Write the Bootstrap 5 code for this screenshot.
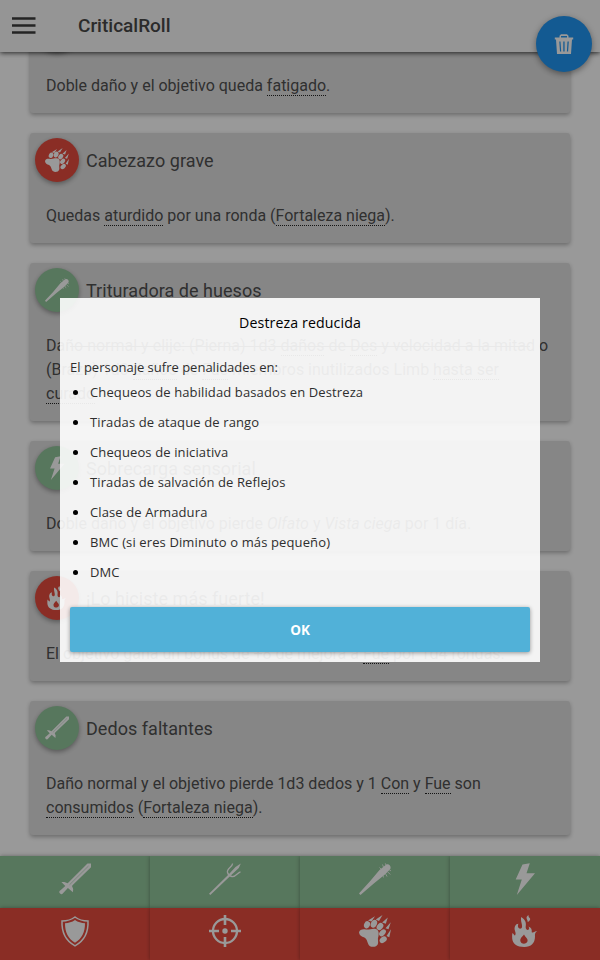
<!DOCTYPE html>
<html lang="es">
<head>
<meta charset="utf-8">
<meta name="viewport" content="width=device-width, initial-scale=1">
<title>CriticalRoll</title>
<link href="https://cdn.jsdelivr.net/npm/bootstrap@5.3.0/dist/css/bootstrap.min.css" rel="stylesheet">
<style>
body{font-family:Roboto,sans-serif;font-size:16px;line-height:24px;color:#505050;background:#fff}
.app{height:960px}
.topbar{height:52px;background:#f8f8f8;box-shadow:0 1px 5px rgba(0,0,0,.75);z-index:2}
.brand{font-size:19px;font-weight:500;color:#484848;margin-left:42px}
.feed{padding:3px 30px 0;gap:20px;margin-top:-52px}
.crit{background:#e0e0e0;border-radius:3px;box-shadow:0 2px 4px rgba(0,0,0,.3);padding-bottom:15px}
.crit h2{font-size:18px;font-weight:400;line-height:24px;letter-spacing:.04px;margin:0;padding-top:2px}
.crit-head{padding:5px 5px 0;gap:7px}
.crit p{margin:22px 16px 0}
.crit abbr{text-decoration:none;border-bottom:1px dotted #222;cursor:help;display:inline-block;line-height:18px}
.disc{width:44px;height:44px;box-shadow:0 2px 5px rgba(0,0,0,.35)}
.disc svg{width:24px;height:24px}
.green{background:#92c69b}.red{background:#e74c3f}
.fab{width:56px;height:56px;top:16px;right:8px;background:#2196f3;box-shadow:0 2px 6px rgba(0,0,0,.4);z-index:3}
.pad{height:52px;box-shadow:0 0 4px rgba(0,0,0,.35);padding-bottom:6px}
.pad svg{width:32px;height:32px}
svg{fill:#fff;display:block}
.veil{background:rgba(0,0,0,.4);z-index:10}
.dialog-box{width:480px;height:364px;background:rgba(255,255,255,.9);padding:10px;color:#2e2e2e;font-family:"Open Sans","Noto Sans",sans-serif;font-size:13px;line-height:20px}
.dialog-box h1{font-size:14.2px;letter-spacing:.1px;line-height:30px;font-weight:500;color:#000;margin:0}
.dialog-box hr{margin:8px 0 10px;border:0;border-top:1px solid #e9e9e9;opacity:1}
.dialog-box ul{padding-left:20px;margin:0;letter-spacing:.12px}
.dialog-box li{height:30px;padding-top:4px}
.dialog-box li::marker{color:#000;font-size:15px}
.ok{height:45px;background:#51b1d8;color:#fff;font-size:13.500px;font-weight:700;border-radius:2px;border:0;box-shadow:0 1px 4px rgba(0,0,0,.4);margin-top:20px}
</style>
<script src="https://cdn.jsdelivr.net/npm/bootstrap@5.3.0/dist/js/bootstrap.bundle.min.js"></script>
</head>
<body>
<svg class="d-none">
<symbol id="sword" viewBox="0 0 32 32"><path d="M28.500.600H32v3.600L14 21.800l-1 1.200 1.200 3-.3 3.200-5-4.300L4 30.300a2 2 0 1 1-3.200-2.600l1-.6L6.300 23 2.400 18.900l2.800.1 3.500 1.300z"/><path d="M29.500 3 10.500 21.800" stroke="#92c69b" stroke-width=".5"/></symbol>
<symbol id="trident" viewBox="0 0 32 32"><path d="M31.800.500 29.800 5 21.500 12.700 1.300 32 0 30.700 19.800 11.300 26.500 4z"/><path d="M23.600.500C23.500 4 17.300 5.500 18.500 9.500c.5 1.800 1.500 3.500 4.500 4 4 .6 5.500-4 8.500-4.700" fill="none" stroke="#fff" stroke-width="1.300"/></symbol>
<symbol id="bat" viewBox="0 0 32 32"><path d="M27 1.700c2.500-1.600 5.600 1 4.300 4.300L26.500 11 14.500 20.700 2.600 31 1.500 32 0 30.400l.8-1L10.800 18.500 20.500 7z"/><path d="M22 6l-1.500-1.500M24.500 4l-1-2.500M27 2.300 26.300.300M30.300 7l1.700.8M28.800 9l2.500 2.500M26.500 10.500l1.500 3M24 12.500l.5 2" stroke="#fff" stroke-width=".8"/></symbol>
<symbol id="bolt" viewBox="0 0 32 32"><path d="M13.500 1.500 20.800.300 17.500 10.300H26L7.800 32l5-15.500H6.700z"/></symbol>
<symbol id="shield" viewBox="0 0 32 32"><path d="M16 2c4 3 9 4 13 4 .5 12-4 20-13 24.800C7 26 2.500 18 3 6c4 0 9-1 13-4z" fill="none" stroke="#fff" stroke-width="1.500"/><path d="M16 5c3 2.200 6.500 3 10 3.300C26 17.500 23 23.500 16 27.800 9 23.500 6 17.500 6 8.300 9.500 8 13 7.200 16 5z"/></symbol>
<symbol id="target" viewBox="0 0 32 32"><circle cx="16" cy="16" r="12" fill="none" stroke="#fff" stroke-width="2.300"/><circle cx="16" cy="16" r="2.700"/><path d="M16 0v10M16 22v10M0 16h10M22 16h10" stroke="#fff" stroke-width="2.600"/></symbol>
<symbol id="paw" viewBox="0 0 32 32"><path d="M0 17.500C.500 14.500 3.500 14 7 14.500c3.500.4 6.500-1.500 10-.5 3.300 1 3 5.500 2 9-.5 2.500 1.500 6-2 8.200-3.500 1.500-6.800.3-7.800-2.300-1.200-2.700-1.200-5-3.800-6.400C2.500 21.500.500 20.500 0 17.500z"/><ellipse cx="8" cy="9.800" rx="2.900" ry="3.700" transform="rotate(25 8 9.800)"/><ellipse cx="14.900" cy="8.700" rx="3" ry="4.100" transform="rotate(25 14.900 8.700)"/><ellipse cx="21" cy="11.500" rx="2.900" ry="3.900" transform="rotate(38 21 11.500)"/><ellipse cx="23.500" cy="17.800" rx="2.700" ry="4" transform="rotate(42 23.500 17.800)"/><ellipse cx="24.200" cy="24.700" rx="2.800" ry="4" transform="rotate(50 24.200 24.700)"/><path d="M9 5.500 16 1.200 12.500 6.500zM16.800 4.500 23.500 0 20 6zM23.200 7.500 28.800 2.500 26.800 8.700zM26.500 13.300 31.800 7.200 29.500 14.200zM27.500 21 32 14.200 30.300 22.200z"/></symbol>
<symbol id="fire" viewBox="0 0 32 32"><path fill-rule="evenodd" d="M12.300 2c4.500 3 5 6 4.400 9.500-.4 3 2.300 4.500 3.300 2.500.4-1-.1-1.800-.6-2.500 3 1 3.700 3.200 3.300 5.700 2 .8 3-1.200 5.500-1.200-2 1-2.500 3-2.200 5.500C26 28 22 32 15.300 32 8 32 3.500 28.500 3.200 23.500c0-2-.3-3.500.3-5.500 1.200 1.200 1.600 2.200 2.500 2.600 2-3-1.500-5-.1-9 .8-2.200 2.300-2.800 3.500-2.800-1.600 3.400 1 6 3 4.500 2.200-2-1.500-7.500-.1-11.300zM15 19.500c-2 2.500-4.500 4-3.500 7 1.200 3.200 6.300 2.600 7-.3.700-2.700-2-3.700-3.500-6.700z"/><path d="M19.500 0c-4 3-.5 4.500-.8 7 3-1.500 3-3.500 1.500-4.500-.7-.7-.7-1.500-.7-2.500z"/></symbol>
</svg>
<div class="app position-relative overflow-hidden d-flex flex-column">
<header class="topbar position-relative d-flex align-items-center flex-shrink-0 px-2">
<svg class="ms-1" width="24" height="18" viewBox="0 0 24 18"><path d="M0 1.500h23.500M0 8.500h23.500M0 15.500h23.500" stroke="#3c3c3c" stroke-width="2.300"/></svg>
<span class="brand">CriticalRoll</span>
</header>
<button class="fab btn rounded-circle position-absolute border-0 p-0 d-flex align-items-center justify-content-center" aria-label="Borrar"><svg width="20" height="22" viewBox="0 0 20 22"><path fill-rule="evenodd" d="M5.500 4.500V2.800L7 1.300h6l1.500 1.500v1.700h4.700v2H18L17 21H3L2 6.500H.800v-2zM7 4.500h6V3H7zM5.300 8.500 6 18.500h1.200L6.500 8.500zm4 0v10h1.300v-10zm4.200 0-.6 10h1.200l.7-10z"/></svg></button>
<main class="feed d-flex flex-column flex-grow-1 overflow-hidden">
<article class="crit flex-shrink-0"><div class="crit-head d-flex align-items-center"><span class="disc green rounded-circle d-flex align-items-center justify-content-center"></span></div><p>Doble daño y el objetivo queda <abbr>fatigado</abbr>.</p></article>
<article class="crit flex-shrink-0"><div class="crit-head d-flex align-items-center"><span class="disc red rounded-circle d-flex align-items-center justify-content-center"><svg><use href="#paw"/></svg></span><h2>Cabezazo grave</h2></div><p>Quedas <abbr>aturdido</abbr> por una ronda (<abbr>Fortaleza niega</abbr>).</p></article>
<article class="crit flex-shrink-0"><div class="crit-head d-flex align-items-center"><span class="disc green rounded-circle d-flex align-items-center justify-content-center"><svg><use href="#bat"/></svg></span><h2>Trituradora de huesos</h2></div><p>Daño normal y elije: (Pierna) 1d3 <abbr>daños</abbr> de <abbr>Des</abbr> y velocidad a la mitad o<br>(Brazo) 1d3 <abbr>daños</abbr> de <abbr>Fue</abbr> miembros inutilizados Limb <abbr>hasta ser</abbr><br><abbr>curado</abbr></p></article>
<article class="crit flex-shrink-0"><div class="crit-head d-flex align-items-center"><span class="disc green rounded-circle d-flex align-items-center justify-content-center"><svg><use href="#bolt"/></svg></span><h2>Sobrecarga sensorial</h2></div><p>Doble daño y el objetivo pierde <em>Olfato</em> y <em>Vista ciega</em> por 1 día.</p></article>
<article class="crit flex-shrink-0"><div class="crit-head d-flex align-items-center"><span class="disc red rounded-circle d-flex align-items-center justify-content-center"><svg><use href="#fire"/></svg></span><h2>¡Lo hiciste más fuerte!</h2></div><p>El objetivo gana un bonus de +8 de mejora a <abbr>Fue</abbr> por 1d4 rondas.</p></article>
<article class="crit flex-shrink-0"><div class="crit-head d-flex align-items-center"><span class="disc green rounded-circle d-flex align-items-center justify-content-center"><svg><use href="#sword"/></svg></span><h2>Dedos faltantes</h2></div><p>Daño normal y el objetivo pierde 1d3 dedos y 1 <abbr>Con</abbr> y <abbr>Fue</abbr> son<br><abbr>consumidos</abbr> (<abbr>Fortaleza niega</abbr>).</p></article>
</main>
<footer class="row row-cols-4 g-0 flex-shrink-0">
<div class="col pad green d-flex align-items-center justify-content-center"><svg><use href="#sword"/></svg></div>
<div class="col pad green d-flex align-items-center justify-content-center"><svg><use href="#trident"/></svg></div>
<div class="col pad green d-flex align-items-center justify-content-center"><svg><use href="#bat"/></svg></div>
<div class="col pad green d-flex align-items-center justify-content-center"><svg><use href="#bolt"/></svg></div>
<div class="col pad red d-flex align-items-center justify-content-center"><svg><use href="#shield"/></svg></div>
<div class="col pad red d-flex align-items-center justify-content-center"><svg><use href="#target"/></svg></div>
<div class="col pad red d-flex align-items-center justify-content-center"><svg><use href="#paw"/></svg></div>
<div class="col pad red d-flex align-items-center justify-content-center"><svg><use href="#fire"/></svg></div>
</footer>
<div class="veil position-absolute top-0 start-0 w-100 h-100 d-flex align-items-center justify-content-center">
<section class="dialog-box" role="dialog" aria-modal="true">
<h1 class="text-center">Destreza reducida</h1>
<hr>
<div>El personaje sufre penalidades en:</div>
<ul><li>Chequeos de habilidad basados en Destreza</li><li>Tiradas de ataque de rango</li><li>Chequeos de iniciativa</li><li>Tiradas de salvación de Reflejos</li><li>Clase de Armadura</li><li>BMC (si eres Diminuto o más pequeño)</li><li>DMC</li></ul>
<button class="ok w-100">OK</button>
</section>
</div>
</div>
</body>
</html>
